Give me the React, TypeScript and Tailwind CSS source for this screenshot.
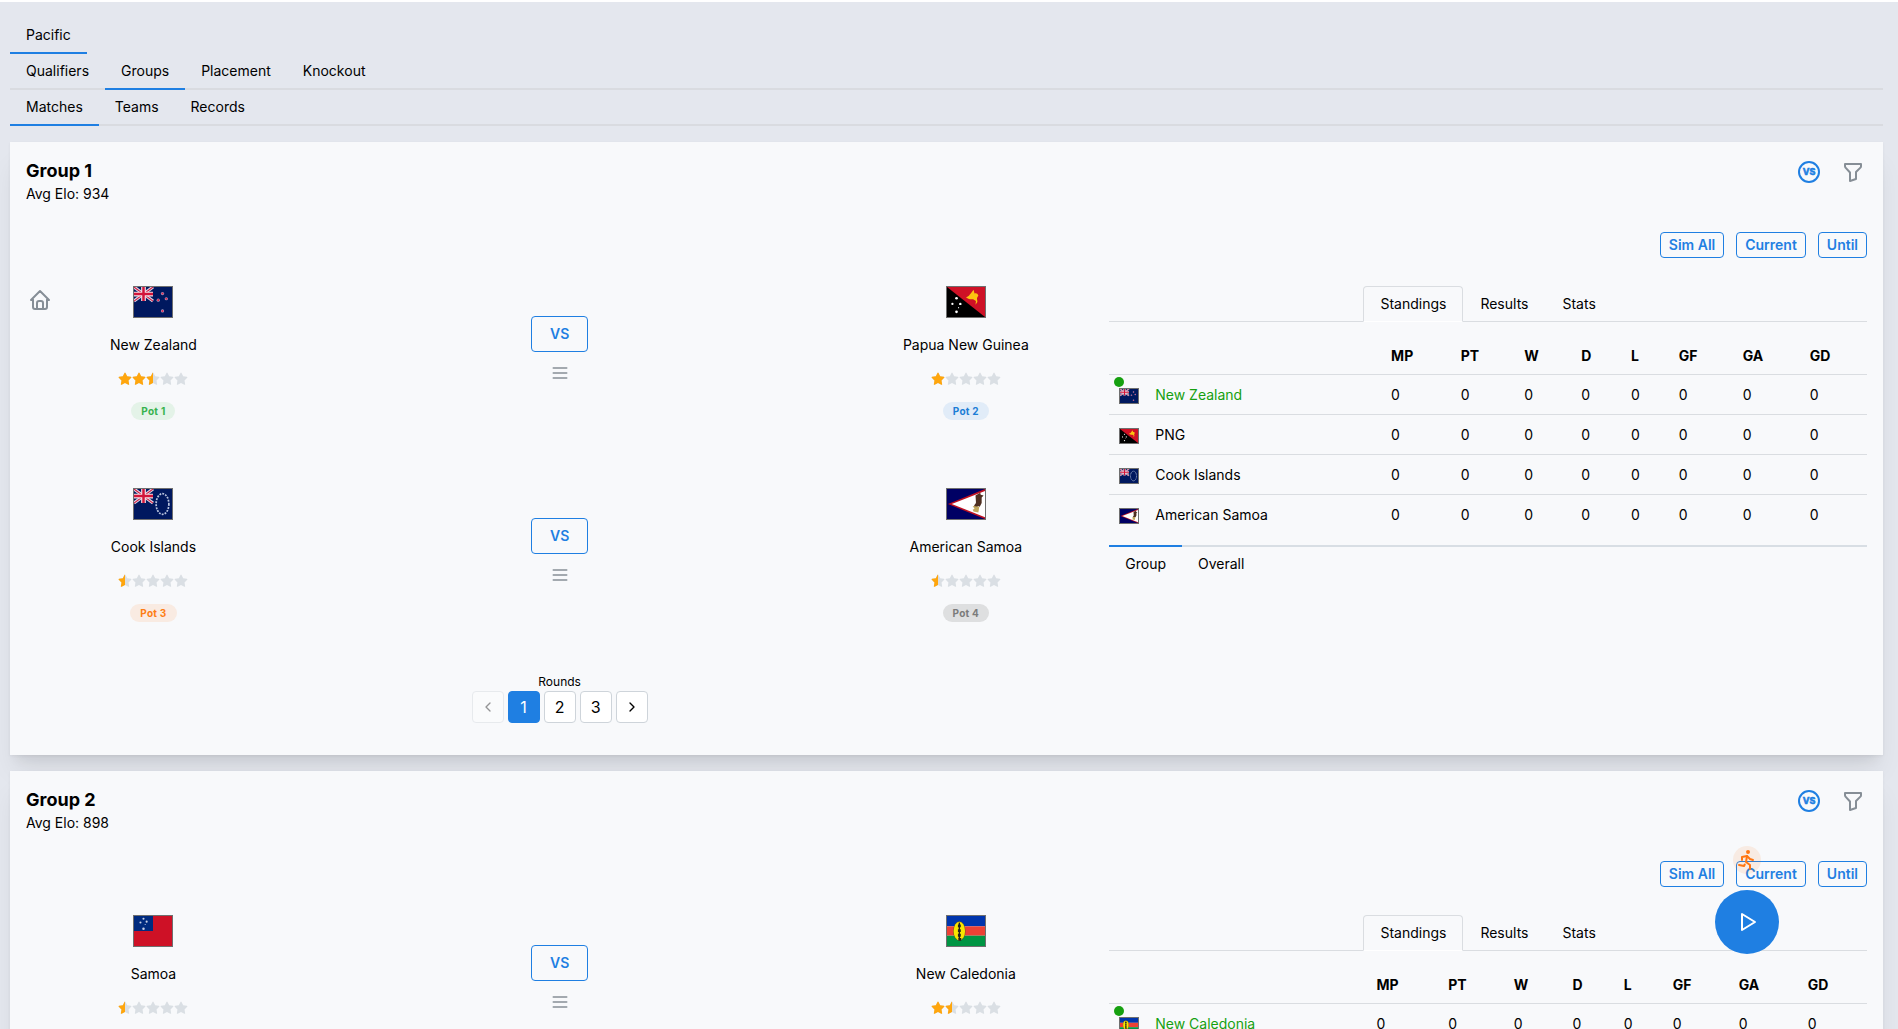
import React, { useState } from 'react'
import clsx from 'clsx'
import { TbChevronLeft, TbChevronRight, TbFilter, TbHome, TbMenu2, TbPlayerPlay, TbRun } from 'react-icons/tb'

type FlagCode = 'nz' | 'pg' | 'ck' | 'as' | 'ws' | 'nc'

interface Team {
  name: string
  short?: string
  flag: FlagCode
  rating: number
  pot: number
}

interface Group {
  name: string
  elo: number
  rounds: number
  matches: { home: Team; away: Team; hosted?: boolean }[]
  standings: Team[]
}

const newZealand: Team = { name: 'New Zealand', flag: 'nz', rating: 2.5, pot: 1 }
const papua: Team = { name: 'Papua New Guinea', short: 'PNG', flag: 'pg', rating: 1, pot: 2 }
const cookIslands: Team = { name: 'Cook Islands', flag: 'ck', rating: 0.5, pot: 3 }
const americanSamoa: Team = { name: 'American Samoa', flag: 'as', rating: 0.5, pot: 4 }
const newCaledonia: Team = { name: 'New Caledonia', flag: 'nc', rating: 1.5, pot: 1 }
const samoa: Team = { name: 'Samoa', flag: 'ws', rating: 0.5, pot: 3 }

const groups: Group[] = [
  {
    name: 'Group 1',
    elo: 934,
    rounds: 3,
    matches: [
      { home: newZealand, away: papua, hosted: true },
      { home: cookIslands, away: americanSamoa },
    ],
    standings: [newZealand, papua, cookIslands, americanSamoa],
  },
  {
    name: 'Group 2',
    elo: 898,
    rounds: 3,
    matches: [{ home: samoa, away: newCaledonia }],
    standings: [newCaledonia, samoa],
  },
]

const columns = ['MP', 'PT', 'W', 'D', 'L', 'GF', 'GA', 'GD']

const potColors: Record<number, string> = {
  1: 'bg-[#e4f3e8] text-[#37b24d]',
  2: 'bg-[#e1ecf8] text-[#1c7ed6]',
  3: 'bg-[#f9ebe2] text-[#fd7e14]',
  4: 'bg-[#dedfe0] text-[#7b7b7b]',
}

const UnionJack = () => (
  <g>
    <path d="M0 0L20 15M20 0L0 15" stroke="#dcd5e4" strokeWidth="3.4" />
    <path d="M0 0L20 15M20 0L0 15" stroke="#d2153a" strokeWidth="1.1" />
    <path d="M10 0V15M0 7.5H20" stroke="#f3dfe6" strokeWidth="5" />
    <path d="M10 0V15M0 7.5H20" stroke="#d2153a" strokeWidth="2.6" />
  </g>
)

const flagArt: Record<FlagCode, React.ReactNode> = {
  nz: (
    <>
      <rect width="40" height="32" fill="#00185f" />
      <UnionJack />
      {[[30, 7], [25.5, 14], [34, 12.5], [30, 25.5]].map(([x, y]) => (
        <g key={y}>
          <circle cx={x} cy={y} r="1.7" fill="#a9a0c4" />
          <circle cx={x} cy={y} r="1.1" fill="#e0234a" />
        </g>
      ))}
    </>
  ),
  ck: (
    <>
      <rect width="40" height="32" fill="#00185f" />
      <UnionJack />
      <ellipse cx="30" cy="16" rx="6.7" ry="11" fill="none" stroke="#b9c4de" strokeWidth="1.8" strokeDasharray="2 1.2" />
    </>
  ),
  pg: (
    <>
      <rect width="40" height="32" fill="#000" />
      <path d="M0 0H40V32Z" fill="#ce1126" />
      <path d="M20 11c3-1 4-3 5-4l3-4 1 4c2-1 3 0 4 2l-1 2c-1 1 0 3 0 5l-2 3 .5-4-3-2-3 0c-2 0-3-1-4.500-2z" fill="#fcc410" />
      {[[10, 12, 1.4], [5.7, 18, 1.2], [14, 18, 1.3], [12.2, 22, 0.6], [10, 26.5, 1.4]].map(([x, y, r]) => (
        <circle key={y + x} cx={x} cy={y} r={r} fill="#fff" />
      ))}
    </>
  ),
  as: (
    <>
      <rect width="40" height="32" fill="#000064" />
      <path d="M40 0V32L1 16Z" fill="#bd1021" />
      <path d="M40 2V30L5 16Z" fill="#fff" />
      <path d="M30 7l5-3 .5 2 3 1-2 2v6l-2 4-2-1-1 3-3-2c0-3 2-3 2-5z" fill="#4f3022" />
      <path d="M27 18l7 1-1 6-5-1-1-2 2-1z" fill="#c2a75c" />
    </>
  ),
  ws: (
    <>
      <rect width="40" height="32" fill="#ce1126" />
      <rect width="20" height="16" fill="#002b7f" />
      {[[10, 3, 1.1], [6.8, 7, 1.1], [13.3, 6, 1.1], [11.8, 9, 0.6], [10, 13.5, 1.3]].map(([x, y, r]) => (
        <circle key={y} cx={x} cy={y} r={r} fill="#c8d0e6" />
      ))}
    </>
  ),
  nc: (
    <>
      <rect width="40" height="11" fill="#0035ad" />
      <rect y="11" width="40" height="10" fill="#ed4135" />
      <rect y="21" width="40" height="11" fill="#009543" />
      <ellipse cx="13" cy="16" rx="6.5" ry="10.3" fill="#6b5a20" />
      <ellipse cx="13" cy="16" rx="6" ry="9.8" fill="#fae600" />
      <path d="M13 7V25" stroke="#231f20" strokeWidth="1.4" />
      <path d="M13 9V12M13 14V17M13 19V22M12 25H15" stroke="#231f20" strokeWidth="3" />
    </>
  ),
}

const Flag = ({ code, small }: { code: FlagCode; small?: boolean }) => (
  <svg
    viewBox="0 0 40 32"
    preserveAspectRatio="none"
    className={clsx('block border border-[#6f6f6f]', small ? 'h-4 w-5' : 'h-8 w-10')}
    aria-hidden="true"
  >
    {flagArt[code]}
  </svg>
)

const starPath =
  'M8.243 7.34l-6.38 .925l-.113 .023a1 1 0 0 0 -.44 1.684l4.622 4.499l-1.09 6.355l-.013 .11a1 1 0 0 0 1.464 .944l5.706 -3l5.693 3l.1 .046a1 1 0 0 0 1.352 -1.1l-1.091 -6.355l4.624 -4.5l.078 -.085a1 1 0 0 0 -.633 -1.62l-6.38 -.926l-2.852 -5.78a1 1 0 0 0 -1.794 0l-2.853 5.78z'

const Rating = ({ value }: { value: number }) => (
  <div className="flex" role="img" aria-label={`${value} of 5 stars`}>
    {[0, 1, 2, 3, 4].map((i) => {
      const fill = Math.max(0, Math.min(1, value - i))
      return (
        <svg key={i} viewBox="0 0 24 24" className="size-3.5">
          <path d={starPath} fill="#dadfe4" />
          {fill > 0 && (
            <svg width={24 * fill} height="24" overflow="hidden">
              <path d={starPath} fill="#ffa60d" />
            </svg>
          )}
        </svg>
      )
    })}
  </div>
)

const TeamColumn = ({ team, hosted }: { team: Team; hosted?: boolean }) => (
  <div className="col-span-3 flex flex-col items-center gap-4">
    <div className="grid w-full grid-cols-[1fr_auto_1fr]">
      <div className="pt-0.5 pl-0.5">{hosted && <TbHome size={24} className="text-[#868e96]" />}</div>
      <Flag code={team.flag} />
    </div>
    <p className="leading-[22px]">{team.name}</p>
    <Rating value={team.rating} />
    <span
      className={clsx('flex h-[18px] items-center rounded-full px-2.5 text-[10px] font-bold tracking-wide', potColors[team.pot])}
    >
      Pot {team.pot}
    </span>
  </div>
)

// Underlined tab row, the marker sits on the row's own border
const TabRow = ({ tabs, initial, line = true }: { tabs: string[]; initial: string; line?: boolean }) => {
  const [active, setActive] = useState(initial)
  return (
    <div role="tablist" className={clsx('flex', line && 'shadow-[inset_0_-2px_0_#d9dbe0]')}>
      {tabs.map((tab) => (
        <button
          key={tab}
          role="tab"
          aria-selected={tab === active}
          onClick={() => setActive(tab)}
          className={clsx(
            'cursor-pointer border-b-2 px-4 py-[10px] leading-[14px]',
            tab === active ? 'border-[#1f7fe2]' : 'border-transparent'
          )}
        >
          {tab}
        </button>
      ))}
    </div>
  )
}

const Pagination = ({ total }: { total: number }) => {
  const [page, setPage] = useState(1)
  const base = 'flex size-8 items-center justify-center rounded border text-base'
  return (
    <div className="flex flex-col items-center">
      <p className="text-xs leading-[18px]">Rounds</p>
      <div className="flex gap-1">
        <button
          aria-label="Previous round"
          disabled={page === 1}
          onClick={() => setPage(page - 1)}
          className={clsx(base, 'border-[#ced4da] bg-white disabled:opacity-40')}
        >
          <TbChevronLeft size={16} />
        </button>
        {Array.from({ length: total }, (_, i) => i + 1).map((n) => (
          <button
            key={n}
            onClick={() => setPage(n)}
            className={clsx(base, n === page ? 'border-[#1f7fe2] bg-[#1f7fe2] text-white' : 'border-[#ced4da] bg-white')}
          >
            {n}
          </button>
        ))}
        <button
          aria-label="Next round"
          disabled={page === total}
          onClick={() => setPage(page + 1)}
          className={clsx(base, 'border-[#ced4da] bg-white disabled:opacity-40')}
        >
          <TbChevronRight size={16} />
        </button>
      </div>
    </div>
  )
}

const Standings = ({ teams }: { teams: Team[] }) => {
  const [view, setView] = useState('Standings')
  const [scope, setScope] = useState('Group')
  return (
    <div className="col-span-5">
      <div role="tablist" className="flex justify-center shadow-[inset_0_-1px_0_#dadde1]">
        {['Standings', 'Results', 'Stats'].map((tab) => (
          <button
            key={tab}
            role="tab"
            aria-selected={tab === view}
            onClick={() => setView(tab)}
            className={clsx(
              'cursor-pointer rounded-t border px-4 py-[10px] leading-[14px]',
              tab === view ? 'border-[#dadde1] border-b-white' : 'border-transparent'
            )}
          >
            {tab}
          </button>
        ))}
      </div>
      <table className="mt-4 mb-[10px] w-full text-left">
        <thead>
          <tr className="border-b border-[#dadde1]">
            <th className="w-9" aria-label="Flag"></th>
            <th className="px-2.5" aria-label="Team"></th>
            {columns.map((col) => (
              <th key={col} className="px-2.5 py-[7px] leading-[22px] font-bold">
                {col}
              </th>
            ))}
          </tr>
        </thead>
        <tbody>
          {teams.map((team, i) => (
            <tr key={team.name} className="h-10 border-b border-[#dadde1] last:border-b-0">
              <td className="pt-0.5 pl-2.5">
                <div className="relative w-5">
                  <Flag code={team.flag} small />
                  {i === 0 && <span className="absolute -top-[11px] -left-[5px] size-2.5 rounded-full bg-[#16a010]" />}
                </div>
              </td>
              <td className={clsx('pr-5 pl-2.5 whitespace-nowrap', i === 0 && 'text-[#16a010]')}>
                {team.short ?? team.name}
              </td>
              {columns.map((col) => (
                <td key={col} className="px-2.5">
                  0
                </td>
              ))}
            </tr>
          ))}
        </tbody>
      </table>
      <div role="tablist" className="flex shadow-[inset_0_2px_0_#d8dee4]">
        {['Group', 'Overall'].map((tab) => (
          <button
            key={tab}
            role="tab"
            aria-selected={tab === scope}
            onClick={() => setScope(tab)}
            className={clsx(
              'cursor-pointer border-t-2 px-4 py-[10px] leading-[14px]',
              tab === scope ? 'border-[#1f7fe2]' : 'border-transparent'
            )}
          >
            {tab}
          </button>
        ))}
      </div>
    </div>
  )
}

const GroupCard = ({ group }: { group: Group }) => (
  <section className="bg-[#f8f9fb] p-4 shadow-[0_1px_3px_rgba(0,0,0,0.05),0_20px_25px_-5px_rgba(0,0,0,0.08),0_10px_10px_-5px_rgba(0,0,0,0.05)]">
    <header className="flex items-start justify-between">
      <div>
        <h2 className="text-lg leading-[26px] font-bold">{group.name}</h2>
        <p className="leading-5">Avg Elo: {group.elo}</p>
      </div>
      <div className="flex items-center gap-5 pt-0.5 pr-0.5">
        <button aria-label="Head to head" className="cursor-pointer text-[#1f7fe2]">
          <svg viewBox="0 0 24 24" className="size-6" fill="none" stroke="currentColor">
            <circle cx="12" cy="12" r="10" strokeWidth="2" />
            <text
              x="12"
              y="15"
              textAnchor="middle"
              fill="currentColor"
              stroke="currentColor"
              strokeWidth="0.6"
              className="font-[Inter,sans-serif] text-[9px] font-bold"
            >
              VS
            </text>
          </svg>
        </button>
        <button aria-label="Filter" className="cursor-pointer text-[#868e96]">
          <TbFilter size={24} />
        </button>
      </div>
    </header>
    <div className="mt-7 flex justify-end gap-3">
      {['Sim All', 'Current', 'Until'].map((label) => (
        <button
          key={label}
          className="h-[26px] cursor-pointer rounded border border-[#1f7fe2] px-2 font-semibold text-[#1f7fe2]"
        >
          {label}
        </button>
      ))}
    </div>
    <div className="mt-7 grid grid-cols-12 gap-4">
      <div className="col-span-7 pb-4">
        {group.matches.map((match) => (
          <div key={match.home.name} className="grid grid-cols-12 gap-4 pb-[68px]">
            <TeamColumn team={match.home} hosted={match.hosted} />
            <div className="col-span-6 flex flex-col items-center gap-[11px] pt-[30px]">
              <button className="h-9 cursor-pointer rounded border border-[#1f7fe2] px-[18px] font-semibold text-[#1f7fe2]">
                VS
              </button>
              <button aria-label="Match menu" className="cursor-pointer text-[#868e96]">
                <TbMenu2 size={20} />
              </button>
            </div>
            <TeamColumn team={match.away} />
          </div>
        ))}
        <div className="-mt-[17px]">
          <Pagination total={group.rounds} />
        </div>
      </div>
      <Standings teams={group.standings} />
    </div>
  </section>
)

export default function App() {
  return (
    <div className="border-t-2 border-white bg-[#e4e7ee] pt-4 pr-[15px] pb-4 pl-[10px] font-[Inter,sans-serif] text-sm text-black">
      <nav>
        <TabRow tabs={['Pacific']} initial="Pacific" line={false} />
        <TabRow tabs={['Qualifiers', 'Groups', 'Placement', 'Knockout']} initial="Groups" />
        <TabRow tabs={['Matches', 'Teams', 'Records']} initial="Matches" />
      </nav>
      <main className="mt-4 flex flex-col gap-4">
        {groups.map((group) => (
          <GroupCard key={group.name} group={group} />
        ))}
      </main>

      {/* Floating simulation controls */}
      <div className="fixed right-[119px] bottom-[75px] flex flex-col items-center gap-4">
        <button
          aria-label="Quick sim"
          className="flex size-7 cursor-pointer items-center justify-center rounded-full bg-[#ff7612]/10 text-[#ff7612]"
        >
          <TbRun size={24} />
        </button>
        <button
          aria-label="Play"
          className="flex size-16 cursor-pointer items-center justify-center rounded-full bg-[#1f7fe2] text-white"
        >
          <TbPlayerPlay size={24} />
        </button>
      </div>
    </div>
  )
}
